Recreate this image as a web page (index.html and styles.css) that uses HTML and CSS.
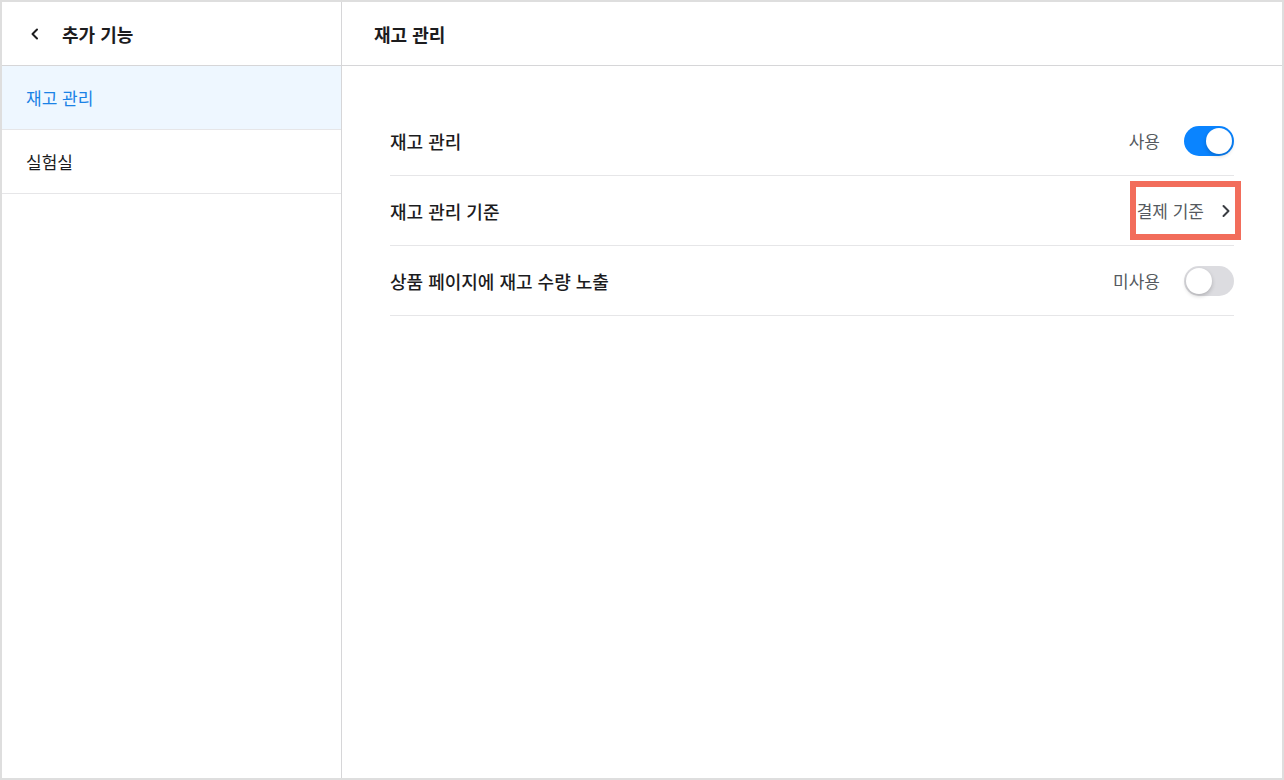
FILE: index.html
```html
<!DOCTYPE html>
<html lang="ko">
  <head>
    <meta charset="UTF-8" />
    <meta name="viewport" content="width=device-width, initial-scale=1.0" />
    <title>추가 기능 | 재고 관리</title>
    <link rel="stylesheet" href="styles.css">
  </head>
  <body>
    <div class="app">
      <aside class="sidebar">
        <div class="sidebar-header">
          <button class="back-btn" type="button">
            <svg width="16" height="16" viewBox="0 0 16 16" fill="none" stroke="currentColor" stroke-width="2" stroke-linecap="round" stroke-linejoin="round">
              <polyline points="10,3.5 5.5,8 10,12.5"></polyline>
            </svg>
          </button>
          <h2>추가 기능</h2>
        </div>
        <nav class="menu">
          <a class="menu-item active" href="#">재고 관리</a>
          <a class="menu-item" href="#">실험실</a>
        </nav>
      </aside>

      <main class="content">
        <div class="content-header">
          <h1>재고 관리</h1>
        </div>

        <div class="settings">
          <div class="setting-row">
            <span class="setting-label">재고 관리</span>
            <div class="setting-value">
              <span class="state">사용</span>
              <span class="toggle on"><span class="knob"></span></span>
            </div>
          </div>

          <div class="setting-row">
            <span class="setting-label">재고 관리 기준</span>
            <a class="setting-link highlight" href="#">
              결제 기준
              <svg width="16" height="16" viewBox="0 0 16 16" fill="none" stroke="currentColor" stroke-width="2" stroke-linecap="round" stroke-linejoin="round">
                <polyline points="5.5,3 10.5,8 5.5,13"></polyline>
              </svg>
            </a>
          </div>

          <div class="setting-row">
            <span class="setting-label">상품 페이지에 재고 수량 노출</span>
            <div class="setting-value">
              <span class="state">미사용</span>
              <span class="toggle"><span class="knob"></span></span>
            </div>
          </div>
        </div>
      </main>
    </div>
  </body>
</html>
```

FILE: styles.css
```css
:root {
  --blue: #0a84ff;
  --text: #1c1c1e;
  --muted: #555a60;
  --line: #d6d6d8;
  --line-light: #e6e6e8;
  --accent-box: #f26d5b;
}

* {
  margin: 0;
  padding: 0;
  box-sizing: border-box;
  font-family: "Noto Sans CJK KR", "Noto Sans", sans-serif;
}

body {
  width: 1284px;
  height: 780px;
  background: #fff;
  color: var(--text);
}

.app {
  height: 100%;
  display: grid;
  grid-template-columns: 340px 1fr;
  border: 2px solid #dedede;
}

/* left menu */
.sidebar {
  border-right: 1px solid var(--line);
}

.sidebar-header {
  height: 64px;
  display: flex;
  align-items: center;
  padding-left: 25px;
  border-bottom: 1px solid var(--line);
}

.back-btn {
  display: flex;
  width: 16px;
  height: 16px;
  background: none;
  border: none;
  color: var(--text);
  margin-right: 19px;
}

.sidebar-header h2 {
  font-size: 18px;
  font-weight: 700;
}

.menu-item {
  display: flex;
  align-items: center;
  height: 64px;
  padding-left: 24px;
  border-bottom: 1px solid var(--line-light);
  font-size: 17px;
  color: var(--text);
  text-decoration: none;
}

.menu-item.active {
  background: #eef7ff;
  color: #1a82e6;
}

/* right panel */
.content-header {
  height: 64px;
  display: flex;
  align-items: center;
  padding-left: 32px;
  border-bottom: 1px solid var(--line);
}

.content-header h1 {
  font-size: 18px;
  font-weight: 700;
}

.settings {
  padding: 40px 48px 0;
}

.setting-row {
  height: 70px;
  display: flex;
  align-items: center;
  justify-content: space-between;
  border-bottom: 1px solid var(--line-light);
}

.setting-label {
  font-size: 18px;
  font-weight: 500;
}

.setting-value {
  display: flex;
  align-items: center;
  gap: 24px;
}

.state {
  font-size: 17px;
  color: var(--muted);
}

.toggle {
  position: relative;
  width: 50px;
  height: 30px;
  border-radius: 15px;
  background: #dcdce0;
}

.toggle.on {
  background: var(--blue);
}

.knob {
  position: absolute;
  top: 2px;
  left: 2px;
  width: 26px;
  height: 26px;
  border-radius: 50%;
  background: #fff;
  box-shadow: 0 2px 4px rgba(0, 0, 0, 0.2);
}

.toggle.on .knob {
  left: 22px;
}

.setting-link {
  display: flex;
  align-items: center;
  gap: 14px;
  font-size: 17px;
  color: var(--muted);
  text-decoration: none;
}

.setting-link svg {
  color: #3a3d42;
}

.setting-link.highlight {
  padding: 11px 1px 11px 1px;
  margin-right: -7px;
  border: 6px solid var(--accent-box);
}
```
